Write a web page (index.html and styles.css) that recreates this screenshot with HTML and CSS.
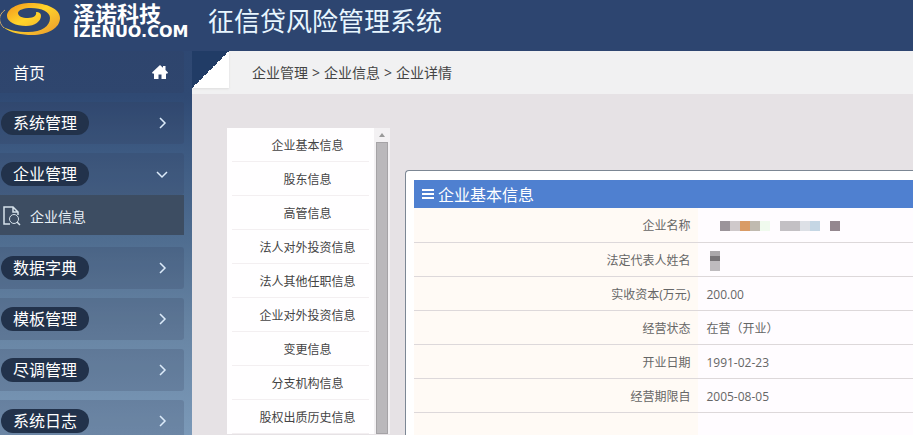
FILE: index.html
```
<!DOCTYPE html>
<html lang="zh-CN">
<head>
  <meta charset="utf-8">
  <title>征信贷风险管理系统</title>
  <link rel="stylesheet" href="styles.css">
</head>
<body>
  <header class="header">
    <a class="logo" href="#">
      <svg class="logo-mark" viewBox="0 0 62 38" width="62" height="38" aria-hidden="true">
        <defs>
          <linearGradient id="ring" x1="0" y1="0" x2="1" y2="1">
            <stop offset="0" stop-color="#f08c1a"/>
            <stop offset=".45" stop-color="#ffd42a"/>
            <stop offset="1" stop-color="#e8962e"/>
          </linearGradient>
        </defs>
        <path fill="url(#ring)" d="M3 27C10 33 22 35 32 35C48 35 60 28 60 18C60 9 47 3 31 3C17 3 7 9 7 16C7 22 16 26 26 26C35 26 41 21 41 16C41 13 39 12 36 12C37 15 34 18 28 18C22 18 18 16 18 13C18 10 24 8 31 8C42 8 50 12 50 18C50 26 42 32 28 32C18 32 9 30 3 27Z"/>
        <path fill="none" stroke="#c9a66a" d="M5 10C-2 15 -2 22 4 28"/>
      </svg>
      <span class="logo-text">
        <span class="logo-name">泽诺科技</span>
        <span class="logo-domain">IZENUO.COM</span>
      </span>
    </a>
    <h1 class="system-name">征信贷风险管理系统</h1>
  </header>

  <div class="layout">
    <nav class="sidebar">
      <a class="menu-item home" href="#">
        <span>首页</span>
        <svg class="menu-icon" viewBox="0 0 16 16" width="16" height="16"><path fill="#fff" d="M8 1L0 8.500L1 10L2 9.200V15H6.500V10.500H9.500V15H14V9.200L15 10L16 8.500L13.500 6V2H11V3.800Z"/></svg>
      </a>
      <button class="menu-item"><span class="pill">系统管理</span><svg class="arrow" viewBox="0 0 12 12"><path d="M4 1L9 6L4 11"/></svg></button>
      <div class="menu-group">
        <button class="menu-item"><span class="pill">企业管理</span><svg class="arrow" viewBox="0 0 12 12"><path d="M1 4L6 9L11 4"/></svg></button>
        <a class="submenu-item" href="#">
          <svg viewBox="0 0 18 20" width="18" height="20" fill="none" stroke="#d5e1ea"><path stroke-width="1.500" d="M7 18H1V1H10L15 6V9M10 1V6H15"/><circle cx="11" cy="13" r="4.500"/><path stroke-width="1.500" d="M14 16L17 19"/></svg>
          <span>企业信息</span>
        </a>
      </div>
      <button class="menu-item"><span class="pill">数据字典</span><svg class="arrow" viewBox="0 0 12 12"><path d="M4 1L9 6L4 11"/></svg></button>
      <button class="menu-item"><span class="pill">模板管理</span><svg class="arrow" viewBox="0 0 12 12"><path d="M4 1L9 6L4 11"/></svg></button>
      <button class="menu-item"><span class="pill">尽调管理</span><svg class="arrow" viewBox="0 0 12 12"><path d="M4 1L9 6L4 11"/></svg></button>
      <button class="menu-item"><span class="pill">系统日志</span><svg class="arrow" viewBox="0 0 12 12"><path d="M4 1L9 6L4 11"/></svg></button>
    </nav>

    <main class="main">
      <div class="breadcrumb">
        <div class="fold"></div>
        <div class="crumbs"><a href="#">企业管理</a><span>&gt;</span><a href="#">企业信息</a><span>&gt;</span><span>企业详情</span></div>
      </div>

      <div class="content">
        <div class="tabs">
          <ul class="tab-list">
            <li><a href="#">企业基本信息</a></li>
            <li><a href="#">股东信息</a></li>
            <li><a href="#">高管信息</a></li>
            <li><a href="#">法人对外投资信息</a></li>
            <li><a href="#">法人其他任职信息</a></li>
            <li><a href="#">企业对外投资信息</a></li>
            <li><a href="#">变更信息</a></li>
            <li><a href="#">分支机构信息</a></li>
            <li><a href="#">股权出质历史信息</a></li>
          </ul>
          <div class="scrollbar">
            <div class="scroll-up"></div>
            <div class="scroll-thumb"></div>
          </div>
        </div>

        <section class="card">
          <h2 class="card-title">
            <svg viewBox="0 0 12 12" width="12" height="12"><path stroke="#fff" stroke-width="2" d="M0 2H12M0 6H12M0 10H12"/></svg>
            企业基本信息
          </h2>
          <table class="info">
            <tr><th>企业名称</th><td><span class="mask mask-name"></span></td></tr>
            <tr><th>法定代表人姓名</th><td><span class="mask mask-person"></span></td></tr>
            <tr><th>实收资本(万元)</th><td>200.00</td></tr>
            <tr><th>经营状态</th><td>在营（开业）</td></tr>
            <tr><th>开业日期</th><td>1991-02-23</td></tr>
            <tr><th>经营期限自</th><td>2005-08-05</td></tr>
            <tr><th></th><td></td></tr>
          </table>
        </section>
      </div>
    </main>
  </div>
</body>
</html>
```
FILE: styles.css
```
* {
  box-sizing: border-box;
}

body {
  margin: 0;
  height: 100vh;
  overflow: hidden;
  display: flex;
  flex-direction: column;
  font-family: "Open Sans", "Noto Sans CJK SC", sans-serif;
  font-size: 12px;
  color: #666;
  background: linear-gradient(#2d4671 0, #2f4973 22%, #3d5a82 35%, #4f6d90 55%, #6784a3 75%, #7b99b8 100%);
}

a {
  color: inherit;
  text-decoration: none;
}

/* header */
.header {
  display: flex;
  align-items: flex-start;
  flex: none;
  height: 51px;
  color: #fff;
  background: #2d4570;
}

.logo {
  display: flex;
  width: 208px;
}

.logo-mark {
  flex: none;
}

.logo-text {
  display: flex;
  flex-direction: column;
  margin-left: 11px;
  white-space: nowrap;
}

.logo-name {
  font-family: "Noto Sans CJK SC", sans-serif;
  font-size: 22px;
  font-weight: bold;
  line-height: 24px;
}

.logo-domain {
  font-family: "DejaVu Sans", sans-serif;
  font-size: 16px;
  font-weight: bold;
  line-height: 16px;
}

.system-name {
  margin: 0;
  font-size: 26px;
  font-weight: normal;
  line-height: 42px;
  color: #e8f6ff;
}

.layout {
  display: flex;
  flex: 1;
  min-height: 0;
}

/* sidebar */
.sidebar {
  display: flex;
  flex-direction: column;
  gap: 9px;
  flex: none;
  width: 192px;
  padding-right: 8px;
}

.menu-item {
  display: flex;
  align-items: center;
  justify-content: space-between;
  flex: none;
  width: 100%;
  height: 42px;
  padding: 0 16px 0 1px;
  border: none;
  border-radius: 0 3px 3px 0;
  font-family: inherit;
  font-size: 16px;
  color: #fff;
  background: rgba(50, 60, 90, 0.2);
  cursor: pointer;
}

.menu-item.home {
  padding-left: 13px;
}

.pill {
  height: 24px;
  padding: 0 12px;
  border-radius: 12px;
  line-height: 24px;
  background: #22324b;
}

.arrow {
  width: 12px;
  height: 12px;
  fill: none;
  stroke: #dcebfa;
  stroke-width: 1.5;
}

.submenu-item {
  display: flex;
  align-items: center;
  gap: 9px;
  height: 40px;
  padding: 2px 0 0 3px;
  font-size: 14px;
  color: #e8f0f6;
  background: #3d4d62;
}

.menu-group {
  margin-bottom: 3px;
}

/* main */
.main {
  flex: 1;
  min-width: 0;
  overflow: hidden;
  background: #e6e2e5;
}

.breadcrumb {
  display: flex;
  height: 43px;
  background: #f1f1f2;
}

.fold {
  width: 37px;
  height: 37px;
  background: linear-gradient(135deg, #213c66 50%, #fff 50%);
  box-shadow: 0 1px 2px #ddd;
}

.crumbs {
  display: flex;
  gap: 4px;
  padding-left: 23px;
  font-size: 14px;
  line-height: 43px;
  color: #444;
}

.content {
  display: flex;
  align-items: flex-start;
  padding: 34px 0 0 35px;
}

.tabs {
  display: flex;
  flex: none;
  width: 163px;
  background: #f3f1f3;
}

.tab-list {
  flex: 1;
  margin: 0;
  padding: 0 5px;
  list-style: none;
  background: #fffeff;
}

.tab-list li {
  height: 34px;
  padding: 1px 0 0 14px;
  border-bottom: 1px solid #f3eff1;
  line-height: 34px;
  text-align: center;
  color: #444;
}

.scrollbar {
  display: flex;
  flex-direction: column;
  width: 12px;
  margin: 0 2px;
}

.scroll-up {
  height: 14px;
}

.scroll-up::before {
  content: "";
  display: block;
  width: 0;
  margin: 0 auto;
  border: 3px solid transparent;
  border-top-width: 5px;
  border-bottom: 4px solid #999;
}

.scroll-thumb {
  flex: 1;
  border: 1px solid #a5a3a6;
  background: #bab8bb;
}

.card {
  flex: 1;
  margin: 42px 0 0 15px;
  padding: 9px 0 0 8px;
  border: 1px solid #7c8794;
  border-right: none;
  border-radius: 4px 0 0 0;
  background: #fff;
}

.card-title {
  display: flex;
  align-items: center;
  gap: 4px;
  height: 28px;
  margin: 0;
  padding-left: 8px;
  font-size: 16px;
  font-weight: normal;
  color: #fff;
  background: #4f80d0;
}

.info {
  width: 100%;
  border-collapse: collapse;
}

.info th,
.info td {
  height: 34px;
  padding: 3px 8px 0;
  border-bottom: 1px solid #ddd8da;
  line-height: 18px;
  font-weight: normal;
}

.info th {
  width: 57%;
  text-align: right;
  background: #fffaf5;
}

.info td {
  background: #fffcff;
}

/* masked values */
.mask {
  display: block;
}

.mask-name {
  width: 120px;
  height: 10px;
  margin-left: 14px;
  background: linear-gradient(90deg, #9b949a 10px, #cfc9cb 10px 20px, #d99b66 20px 30px, #c0bab0 30px 40px, #f0faee 40px 50px, transparent 50px 60px, #c3c0c4 60px 80px, #dde0e6 80px 90px, #c5d6e4 90px 100px, transparent 100px 110px, #94878f 110px);
}

.mask-person {
  width: 10px;
  height: 20px;
  margin-left: 4px;
  background: linear-gradient(#aaa7aa 5px, #777477 5px 10px, #bebbbe 10px);
}
```
